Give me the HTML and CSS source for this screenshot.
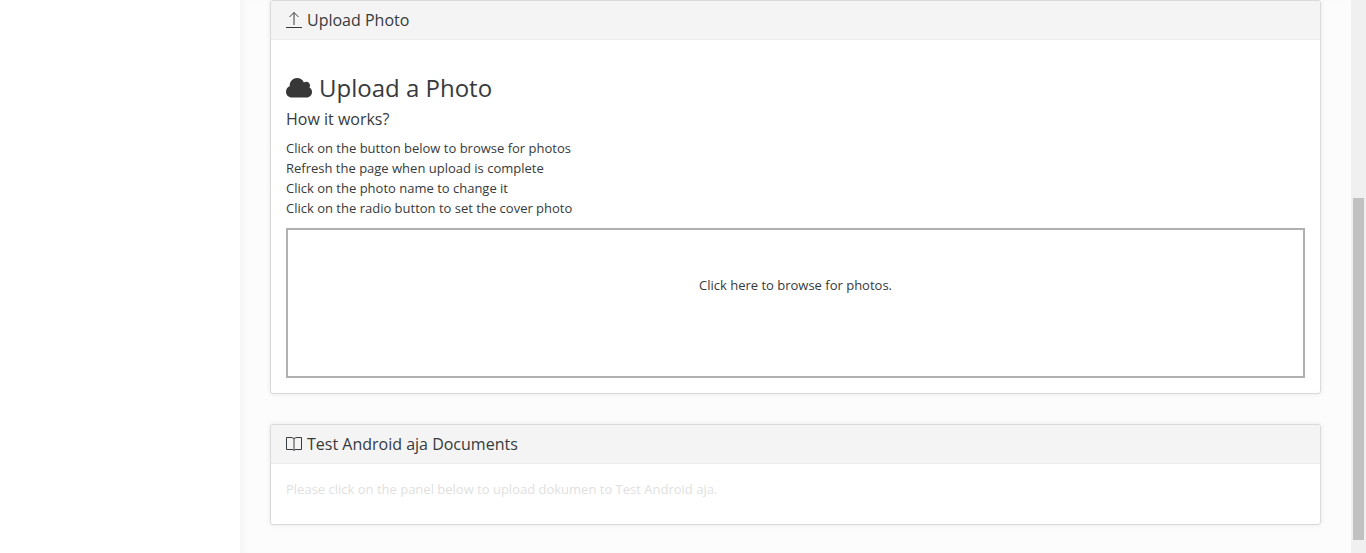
FILE: index.html
```
<!DOCTYPE html>
<html lang="en">
<head>
<meta charset="utf-8">
<meta name="viewport" content="width=device-width, initial-scale=1">
<title>Upload Photo</title>
<link rel="stylesheet" href="styles.css">
</head>
<body>
<div class="layout">
  <aside class="sidebar"></aside>
  <main class="content">
    <section class="panel">
      <header class="panel-header">
        <svg class="panel-icon" viewBox="0 0 16 18" aria-hidden="true"><path d="M0 16.5h16M8 14V1.500M3.500 6L8 1.500 12.500 6"/></svg>
        <h2 class="panel-title">Upload Photo</h2>
      </header>
      <div class="panel-body upload-body">
        <h3 class="upload-title">
          <svg class="cloud-icon" viewBox="0 0 26 20" aria-hidden="true"><path d="M6 19.500C2.500 19.500 0 17 0 13.700 0 11.200 1.500 9.200 3.700 8.300V7.500C3.700 3.400 7 .1 11.100.1c3.100 0 5.700 1.800 6.800 4.400.7-.5 1.500-.8 2.400-.8 2.100 0 3.700 1.700 3.700 3.700 0 .8-.2 1.500-.6 2.100 1.600.8 2.600 2.500 2.600 4.500 0 3.100-2.400 5.500-5.500 5.500z"/></svg>
          <span>Upload a Photo</span>
        </h3>
        <h4 class="steps-title">How it works?</h4>
        <ul class="steps">
          <li>Click on the button below to browse for photos</li>
          <li>Refresh the page when upload is complete</li>
          <li>Click on the photo name to change it</li>
          <li>Click on the radio button to set the cover photo</li>
        </ul>
        <button type="button" class="dropzone">Click here to browse for photos.</button>
      </div>
    </section>
    <section class="panel">
      <header class="panel-header">
        <svg class="panel-icon" viewBox="0 0 16 18" aria-hidden="true"><path d="M8 3.500C6.800 2.700 5.500 2.500 4 2.500H.5v12H6c1 0 1.600.2 2 1 .4-.8 1-1 2-1h5.500v-12H12c-1.500 0-2.800.2-4 1zM8 3.500v12"/></svg>
        <h2 class="panel-title">Test Android aja Documents</h2>
      </header>
      <div class="panel-body documents-body">
        <p class="hint">Please click on the panel below to upload dokumen to Test Android aja.</p>
      </div>
    </section>
  </main>
  <div class="scroll-track" aria-hidden="true"><div class="scroll-thumb"></div></div>
</div>
</body>
</html>
```
FILE: styles.css
```
* {
  box-sizing: border-box;
}

body {
  margin: 0;
  background: #fff;
  color: #373a3c;
  font: 13px/20px "Open Sans", "Liberation Sans", sans-serif;
}

h2, h3, h4, p, ul {
  margin: 0;
  padding: 0;
  font-weight: 400;
}

.layout {
  display: grid;
  grid-template-columns: 240px minmax(0, 1fr) 15px;
  min-height: 100vh;
}

.content {
  display: flex;
  flex-direction: column;
  gap: 30px;
  padding: 0 30px 28px;
  background: #fcfcfc;
  box-shadow: inset 6px 0 6px -3px #f4f4f4;
}

.panel {
  background: #fff;
  border: 1px solid #d9d9d9;
  border-radius: 3px;
  box-shadow: 0 0 5px #e9e9e9;
}

.panel-header {
  display: flex;
  align-items: center;
  gap: 5px;
  padding: 8px 15px;
  background: #f4f4f4;
  border-bottom: 1px solid #ececec;
  border-radius: 2px 2px 0 0;
}

.panel-icon {
  width: 16px;
  height: 18px;
  fill: none;
  stroke: #373a3c;
}

.panel-title {
  font-size: 16px;
  line-height: 22px;
}

.panel-body {
  padding: 15px;
}

.upload-body {
  padding-top: 32px;
}

.upload-title {
  display: flex;
  align-items: center;
  gap: 7px;
  font-size: 24px;
  line-height: 32px;
}

.cloud-icon {
  width: 26px;
  height: 20px;
  fill: #373737;
}

.steps-title {
  margin-top: 4px;
  font-size: 16px;
  line-height: 22px;
}

.steps {
  margin: 8px 0 10px;
  list-style: none;
}

.dropzone {
  display: block;
  width: 100%;
  min-height: 150px;
  padding: 16px 16px 52px;
  background: #fff;
  border: 2px solid #b0b0b0;
  color: inherit;
  font: inherit;
  cursor: pointer;
}

.documents-body {
  min-height: 60px;
}

.hint {
  color: #dfdfdf;
}

.scroll-track {
  padding: 198px 2px 13px;
  background: #f0f0f0;
}

.scroll-thumb {
  height: 100%;
  background: #c1c1c1;
}
```
